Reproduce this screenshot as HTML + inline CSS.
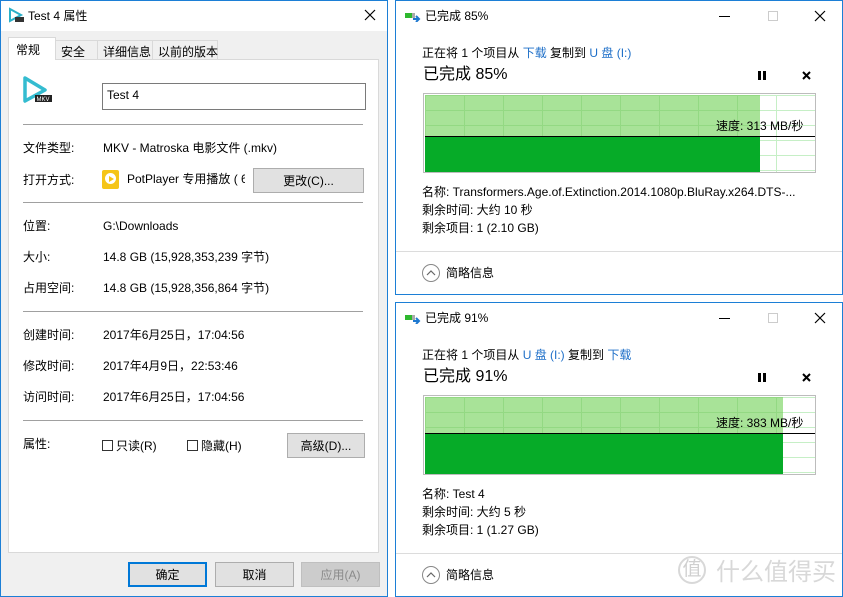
<!DOCTYPE html>
<html><head><meta charset="utf-8"><style>
*{margin:0;padding:0;box-sizing:border-box}
body{width:843px;height:597px;background:#fff;position:relative;overflow:hidden;font-family:"Liberation Sans","Noto Sans CJK SC",sans-serif;font-size:12px;line-height:14px;color:#000}
.a{position:absolute;white-space:nowrap}
.win{position:absolute;border:1px solid #1c7fd6;background:#fff}
.sep{position:absolute;height:1px;background:#a0a0a0}
.btn{position:absolute;background:#e1e1e1;border:1px solid #adadad;text-align:center;font-size:12px}
.blue{color:#1e6fc8}
.cb{display:inline-block;width:11px;height:11px;border:1px solid #333;vertical-align:-1px;margin-right:3px}
.grid{position:absolute;background-image:linear-gradient(#c6efc6 1px,transparent 1px),linear-gradient(90deg,#c6efc6 1px,transparent 1px);background-size:39px 15px}
.pause{position:absolute;width:8px;height:9px;border-left:3px solid #000;border-right:3px solid #000}
</style></head><body>

<!-- LEFT PROPERTIES WINDOW -->
<div class="win" style="left:0;top:0;width:388px;height:597px;background:#f0f0f0">
  <div class="a" style="left:0;top:0;width:386px;height:30px;background:#fff"></div>
  <svg class="a" style="left:7px;top:6px" width="16" height="16"><path d="M2 2 L13 8 L2 14 Z" fill="none" stroke="#2ab0c8" stroke-width="2"/><rect x="7" y="10" width="9" height="5" fill="#333"/></svg>
  <div class="a" style="left:27px;top:8px;font-size:12px">Test 4 属性</div>
  <svg class="a" style="left:363px;top:8px" width="12" height="12"><path d="M1 1 L11 11 M11 1 L1 11" stroke="#000" stroke-width="1.2"/></svg>
  <!-- tabs -->
  <div class="a" style="left:7px;top:36px;width:48px;height:23px;background:#fff;border:1px solid #d9d9d9;border-bottom:none;z-index:2;padding:5px 0 0 7px">常规</div>
  <div class="a" style="left:54px;top:39px;width:43px;height:20px;border:1px solid #d9d9d9;padding:4px 0 0 5px">安全</div>
  <div class="a" style="left:96px;top:39px;width:56px;height:20px;border:1px solid #d9d9d9;padding:4px 0 0 5px">详细信息</div>
  <div class="a" style="left:151px;top:39px;width:66px;height:20px;border:1px solid #d9d9d9;padding:4px 0 0 5px">以前的版本</div>
  <div class="a" style="left:7px;top:58px;width:371px;height:494px;background:#fff;border:1px solid #d9d9d9"></div>
  <svg class="a" style="left:20px;top:74px" width="34" height="30"><path d="M4 3 L24 15 L4 26 Z" fill="none" stroke="#34bcd0" stroke-width="3.5" stroke-linejoin="round"/><rect x="14" y="20" width="17" height="7" fill="#222"/><text x="15.5" y="26" font-size="6" fill="#fff" font-family="Liberation Sans">MKV</text></svg>
  <div class="a" style="left:101px;top:82px;width:264px;height:27px;border:1px solid #7a7a7a;background:#fff;padding:4px 4px">Test 4</div>
  <div class="sep" style="left:22px;top:123px;width:340px"></div>
  <div class="a" style="left:22px;top:140px">文件类型:</div>
  <div class="a" style="left:102px;top:140px">MKV - Matroska 电影文件 (.mkv)</div>
  <div class="a" style="left:22px;top:172px">打开方式:</div>
  <div class="a" style="left:101px;top:169px;width:17px;height:19px;background:#f5c518;border-radius:2px"></div>
  <div class="a" style="left:104px;top:172px;width:11px;height:11px;border-radius:50%;background:#fff"></div>
  <div class="a" style="left:108px;top:175px;width:0;height:0;border-left:5px solid #f5c518;border-top:3px solid transparent;border-bottom:3px solid transparent"></div>
  <div class="a" style="left:126px;top:171px;width:118px;overflow:hidden">PotPlayer 专用播放 ( 64</div>
  <div class="btn" style="left:252px;top:167px;width:111px;height:25px;padding-top:5px">更改(C)...</div>
  <div class="sep" style="left:22px;top:201px;width:340px"></div>
  <div class="a" style="left:22px;top:218px">位置:</div>
  <div class="a" style="left:102px;top:218px">G:\Downloads</div>
  <div class="a" style="left:22px;top:249px">大小:</div>
  <div class="a" style="left:102px;top:249px">14.8 GB (15,928,353,239 字节)</div>
  <div class="a" style="left:22px;top:280px">占用空间:</div>
  <div class="a" style="left:102px;top:280px">14.8 GB (15,928,356,864 字节)</div>
  <div class="sep" style="left:22px;top:310px;width:340px"></div>
  <div class="a" style="left:22px;top:327px">创建时间:</div>
  <div class="a" style="left:102px;top:327px">2017年6月25日，17:04:56</div>
  <div class="a" style="left:22px;top:358px">修改时间:</div>
  <div class="a" style="left:102px;top:358px">2017年4月9日，22:53:46</div>
  <div class="a" style="left:22px;top:389px">访问时间:</div>
  <div class="a" style="left:102px;top:389px">2017年6月25日，17:04:56</div>
  <div class="sep" style="left:22px;top:419px;width:340px"></div>
  <div class="a" style="left:22px;top:436px">属性:</div>
  <div class="a" style="left:101px;top:438px"><span class="cb"></span>只读(R)</div>
  <div class="a" style="left:186px;top:438px"><span class="cb"></span>隐藏(H)</div>
  <div class="btn" style="left:286px;top:432px;width:78px;height:25px;padding-top:5px">高级(D)...</div>
  <div class="btn" style="left:127px;top:561px;width:79px;height:25px;padding-top:4px;border:2px solid #0078d7">确定</div>
  <div class="btn" style="left:214px;top:561px;width:79px;height:25px;padding-top:5px">取消</div>
  <div class="btn" style="left:300px;top:561px;width:79px;height:25px;padding-top:5px;background:#cccccc;border-color:#bfbfbf;color:#8a8a8a">应用(A)</div>
</div>

<!-- TOP RIGHT COPY WINDOW -->
<div class="win" style="left:395px;top:0;width:448px;height:295px">
  <svg class="a" style="left:9px;top:11px" width="16" height="10"><rect x="0" y="1" width="7" height="5" fill="#2eb82e"/><rect x="7" y="1" width="3" height="5" fill="#aaa"/><path d="M8 7 H14 M11 4 L14 7 L11 10" stroke="#1e78d0" stroke-width="2" fill="none"/></svg>
  <div class="a" style="left:29px;top:8px">已完成 85%</div>
  <div class="a" style="left:323px;top:15px;width:11px;height:1px;background:#000"></div>
  <div class="a" style="left:372px;top:10px;width:10px;height:10px;border:1px solid #ccc"></div>
  <svg class="a" style="left:418px;top:9px" width="12" height="12"><path d="M1 1 L11 11 M11 1 L1 11" stroke="#000" stroke-width="1.2"/></svg>
  <div class="a" style="left:26px;top:45px">正在将 1 个项目从 <span class="blue">下载</span> 复制到 <span class="blue">U 盘 (I:)</span></div>
  <div class="a" style="left:27px;top:65px;font-size:16px;line-height:18px">已完成 85%</div>
  <div class="pause" style="left:362px;top:70px"></div>
  <svg class="a" style="left:406px;top:70px" width="9" height="9"><path d="M1 1 L8 8 M8 1 L1 8" stroke="#000" stroke-width="2"/></svg>
  <div class="a" style="left:27px;top:92px;width:393px;height:80px;border:1px solid #bcbcbc;background:#fff">
    <div class="grid" style="left:1px;top:1px;width:390px;height:77px"></div>
    <div class="a" style="left:1px;top:1px;width:335px;height:42px;background:#a8e398;background-image:linear-gradient(#93d983 1px,transparent 1px),linear-gradient(90deg,#93d983 1px,transparent 1px);background-size:39px 15px"></div>
    <div class="a" style="left:1px;top:43px;width:335px;height:35px;background:#06ab28"></div>
    <div class="a" style="left:1px;top:42px;width:390px;height:1px;background:#000"></div>
    <div class="a" style="left:292px;top:25px">速度: 313 MB/秒</div>
  </div>
  <div class="a" style="left:26px;top:184px">名称: Transformers.Age.of.Extinction.2014.1080p.BluRay.x264.DTS-...</div>
  <div class="a" style="left:26px;top:202px">剩余时间: 大约 10 秒</div>
  <div class="a" style="left:26px;top:220px">剩余项目: 1 (2.10 GB)</div>
  <div class="a" style="left:0;top:250px;width:446px;height:1px;background:#dcdcdc"></div>
  <div class="a" style="left:26px;top:263px;width:18px;height:18px;border:1px solid #888;border-radius:50%"></div>
  <svg class="a" style="left:29px;top:266px" width="12" height="12"><path d="M2 8 L6 4 L10 8" stroke="#666" fill="none" stroke-width="1.2"/></svg>
  <div class="a" style="left:50px;top:265px">简略信息</div>
</div>

<!-- BOTTOM RIGHT COPY WINDOW -->
<div class="win" style="left:395px;top:302px;width:448px;height:295px">
  <svg class="a" style="left:9px;top:11px" width="16" height="10"><rect x="0" y="1" width="7" height="5" fill="#2eb82e"/><rect x="7" y="1" width="3" height="5" fill="#aaa"/><path d="M8 7 H14 M11 4 L14 7 L11 10" stroke="#1e78d0" stroke-width="2" fill="none"/></svg>
  <div class="a" style="left:29px;top:8px">已完成 91%</div>
  <div class="a" style="left:323px;top:15px;width:11px;height:1px;background:#000"></div>
  <div class="a" style="left:372px;top:10px;width:10px;height:10px;border:1px solid #ccc"></div>
  <svg class="a" style="left:418px;top:9px" width="12" height="12"><path d="M1 1 L11 11 M11 1 L1 11" stroke="#000" stroke-width="1.2"/></svg>
  <div class="a" style="left:26px;top:45px">正在将 1 个项目从 <span class="blue">U 盘 (I:)</span> 复制到 <span class="blue">下载</span></div>
  <div class="a" style="left:27px;top:65px;font-size:16px;line-height:18px">已完成 91%</div>
  <div class="pause" style="left:362px;top:70px"></div>
  <svg class="a" style="left:406px;top:70px" width="9" height="9"><path d="M1 1 L8 8 M8 1 L1 8" stroke="#000" stroke-width="2"/></svg>
  <div class="a" style="left:27px;top:92px;width:393px;height:80px;border:1px solid #bcbcbc;background:#fff">
    <div class="grid" style="left:1px;top:1px;width:390px;height:77px"></div>
    <div class="a" style="left:1px;top:1px;width:358px;height:37px;background:#a8e398;background-image:linear-gradient(#93d983 1px,transparent 1px),linear-gradient(90deg,#93d983 1px,transparent 1px);background-size:39px 15px"></div>
    <div class="a" style="left:1px;top:38px;width:358px;height:40px;background:#06ab28"></div>
    <div class="a" style="left:1px;top:37px;width:390px;height:1px;background:#000"></div>
    <div class="a" style="left:292px;top:20px">速度: 383 MB/秒</div>
  </div>
  <div class="a" style="left:26px;top:184px">名称: Test 4</div>
  <div class="a" style="left:26px;top:202px">剩余时间: 大约 5 秒</div>
  <div class="a" style="left:26px;top:220px">剩余项目: 1 (1.27 GB)</div>
  <div class="a" style="left:0;top:250px;width:446px;height:1px;background:#dcdcdc"></div>
  <div class="a" style="left:26px;top:263px;width:18px;height:18px;border:1px solid #888;border-radius:50%"></div>
  <svg class="a" style="left:29px;top:266px" width="12" height="12"><path d="M2 8 L6 4 L10 8" stroke="#666" fill="none" stroke-width="1.2"/></svg>
  <div class="a" style="left:50px;top:265px">简略信息</div>
  <div class="a" style="left:282px;top:253px;width:28px;height:28px;border:2px solid #d8d8d8;border-radius:50%;color:#d0d0d0;font-size:19px;text-align:center;line-height:24px">值</div>
  <div class="a" style="left:320px;top:256px;font-size:24px;line-height:28px;color:#d8d8d8">什么值得买</div>
</div>
</body></html>
